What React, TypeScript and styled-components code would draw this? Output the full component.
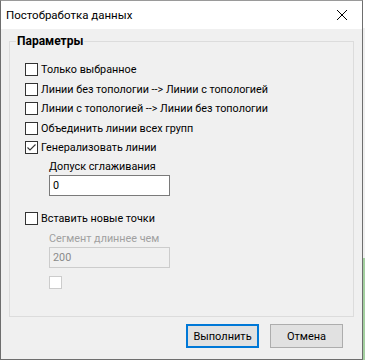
import React, { useState } from 'react';
import styled, { createGlobalStyle } from 'styled-components';

const GlobalStyle = createGlobalStyle`
  html, body {
    margin: 0;
    padding: 0;
    width: 365px;
    height: 360px;
    overflow: hidden;
    background: #f0f0f0;
  }
  body {
    font-family: Roboto, 'Liberation Sans', sans-serif;
  }
`;

const Screen = styled.div`
  display: flex;
  width: 365px;
  height: 360px;
`;

const Backdrop = styled.div`
  flex: 1;
  background: linear-gradient(to bottom, #ffffff 0 28px, #f0f0f0 28px 258px, #a3cf9f 258px);
`;

const Window = styled.div`
  width: 363px;
  height: 360px;
  box-sizing: border-box;
  border: 1px solid #6e6e6e;
  border-top-color: #9a9a9a;
  display: flex;
  flex-direction: column;
  background: #f0f0f0;
`;

const TitleBar = styled.div`
  height: 28px;
  background: #ffffff;
  display: flex;
  align-items: center;
  justify-content: space-between;
  padding-left: 5px;
  font-size: 11.5px;
  color: #000;
`;

const CloseButton = styled.div`
  width: 40px;
  height: 28px;
  display: flex;
  align-items: center;
  justify-content: center;
`;

const Body = styled.div`
  flex: 1;
  display: flex;
  flex-direction: column;
  padding: 5px 8px 0 8px;
`;

const GroupBox = styled.fieldset`
  margin: 0;
  height: 283px;
  box-sizing: border-box;
  border: 1px solid #dcdcdc;
  padding: 4px 0 0 15px;
  display: flex;
  flex-direction: column;
`;

const Legend = styled.legend`
  font-size: 12px;
  font-weight: 700;
  padding: 0 1px;
  margin-left: -9px;
  color: #000;
`;

const CheckRow = styled.label<{ $gap?: number }>`
  display: flex;
  align-items: center;
  gap: 3px;
  height: 19.5px;
  margin-top: ${(p) => p.$gap ?? 0}px;
  font-size: 10.8px;
  color: #000;
  cursor: default;
`;

const Box = styled.span<{ $disabled?: boolean }>`
  width: 13px;
  height: 13px;
  box-sizing: border-box;
  border: 1px solid ${(p) => (p.$disabled ? '#cccccc' : '#333333')};
  background: #ffffff;
  display: flex;
  align-items: center;
  justify-content: center;
  flex-shrink: 0;
`;

const SubBlock = styled.div<{ $gap?: number }>`
  display: flex;
  flex-direction: column;
  padding-left: 24px;
  margin-top: ${(p) => p.$gap ?? 0}px;
`;

const FieldLabel = styled.div<{ $disabled?: boolean }>`
  font-size: 10.8px;
  line-height: 14px;
  color: ${(p) => (p.$disabled ? '#a0a0a0' : '#000')};
`;

const Input = styled.div<{ $disabled?: boolean }>`
  width: 121px;
  height: 21px;
  box-sizing: border-box;
  margin-top: 1px;
  border: 1px solid ${(p) => (p.$disabled ? '#cccccc' : '#7a7a7a')};
  background: ${(p) => (p.$disabled ? '#f0f0f0' : '#ffffff')};
  color: ${(p) => (p.$disabled ? '#8a8a8a' : '#000')};
  font-size: 10.8px;
  display: flex;
  align-items: center;
  padding-left: 3px;
`;

const Footer = styled.div`
  display: flex;
  justify-content: flex-end;
  gap: 11px;
  padding: 7px 11px 0 0;
`;

const Button = styled.button<{ $primary?: boolean }>`
  width: 73px;
  height: 24px;
  box-sizing: border-box;
  font-family: inherit;
  font-size: 11px;
  color: #000;
  background: #e1e1e1;
  border: ${(p) => (p.$primary ? '2px solid #0078d7' : '1px solid #adadad')};
  padding: 0;
`;

function Check({ checked, disabled }: { checked?: boolean; disabled?: boolean }) {
  return (
    <Box $disabled={disabled}>
      {checked && (
        <svg width="11" height="11" viewBox="0 0 11 11">
          <path d="M1.5 5.5 L4 8 L9.5 2.5" fill="none" stroke="#333" strokeWidth="1.1" />
        </svg>
      )}
    </Box>
  );
}

export default function App() {
  const [options] = useState([
    { label: 'Только выбранное', checked: false },
    { label: 'Линии без топологии --> Линии с топологией', checked: false },
    { label: 'Линии с топологией --> Линии без топологии', checked: false },
    { label: 'Объединить линии всех групп', checked: false },
    { label: 'Генерализовать линии', checked: true },
  ]);

  return (
    <>
      <GlobalStyle />
      <Screen>
        <Window>
          <TitleBar>
            <span>Постобработка данных</span>
            <CloseButton>
              <svg width="12" height="12" viewBox="0 0 12 12">
                <path d="M1 1 L11 11 M11 1 L1 11" stroke="#000" strokeWidth="1" />
              </svg>
            </CloseButton>
          </TitleBar>
          <Body>
            <GroupBox>
              <Legend>Параметры</Legend>
              {options.map((o, i) => (
                <CheckRow key={i} $gap={i === 0 ? 8 : 0}>
                  <Check checked={o.checked} />
                  {o.label}
                </CheckRow>
              ))}
              <SubBlock $gap={2}>
                <FieldLabel>Допуск сглаживания</FieldLabel>
                <Input>0</Input>
              </SubBlock>
              <CheckRow $gap={13}>
                <Check />
                Вставить новые точки
              </CheckRow>
              <SubBlock $gap={4}>
                <FieldLabel $disabled>Сегмент длиннее чем</FieldLabel>
                <Input $disabled>200</Input>
                <CheckRow $gap={5}>
                  <Check disabled />
                </CheckRow>
              </SubBlock>
            </GroupBox>
            <Footer>
              <Button $primary>Выполнить</Button>
              <Button>Отмена</Button>
            </Footer>
          </Body>
        </Window>
        <Backdrop />
      </Screen>
    </>
  );
}
